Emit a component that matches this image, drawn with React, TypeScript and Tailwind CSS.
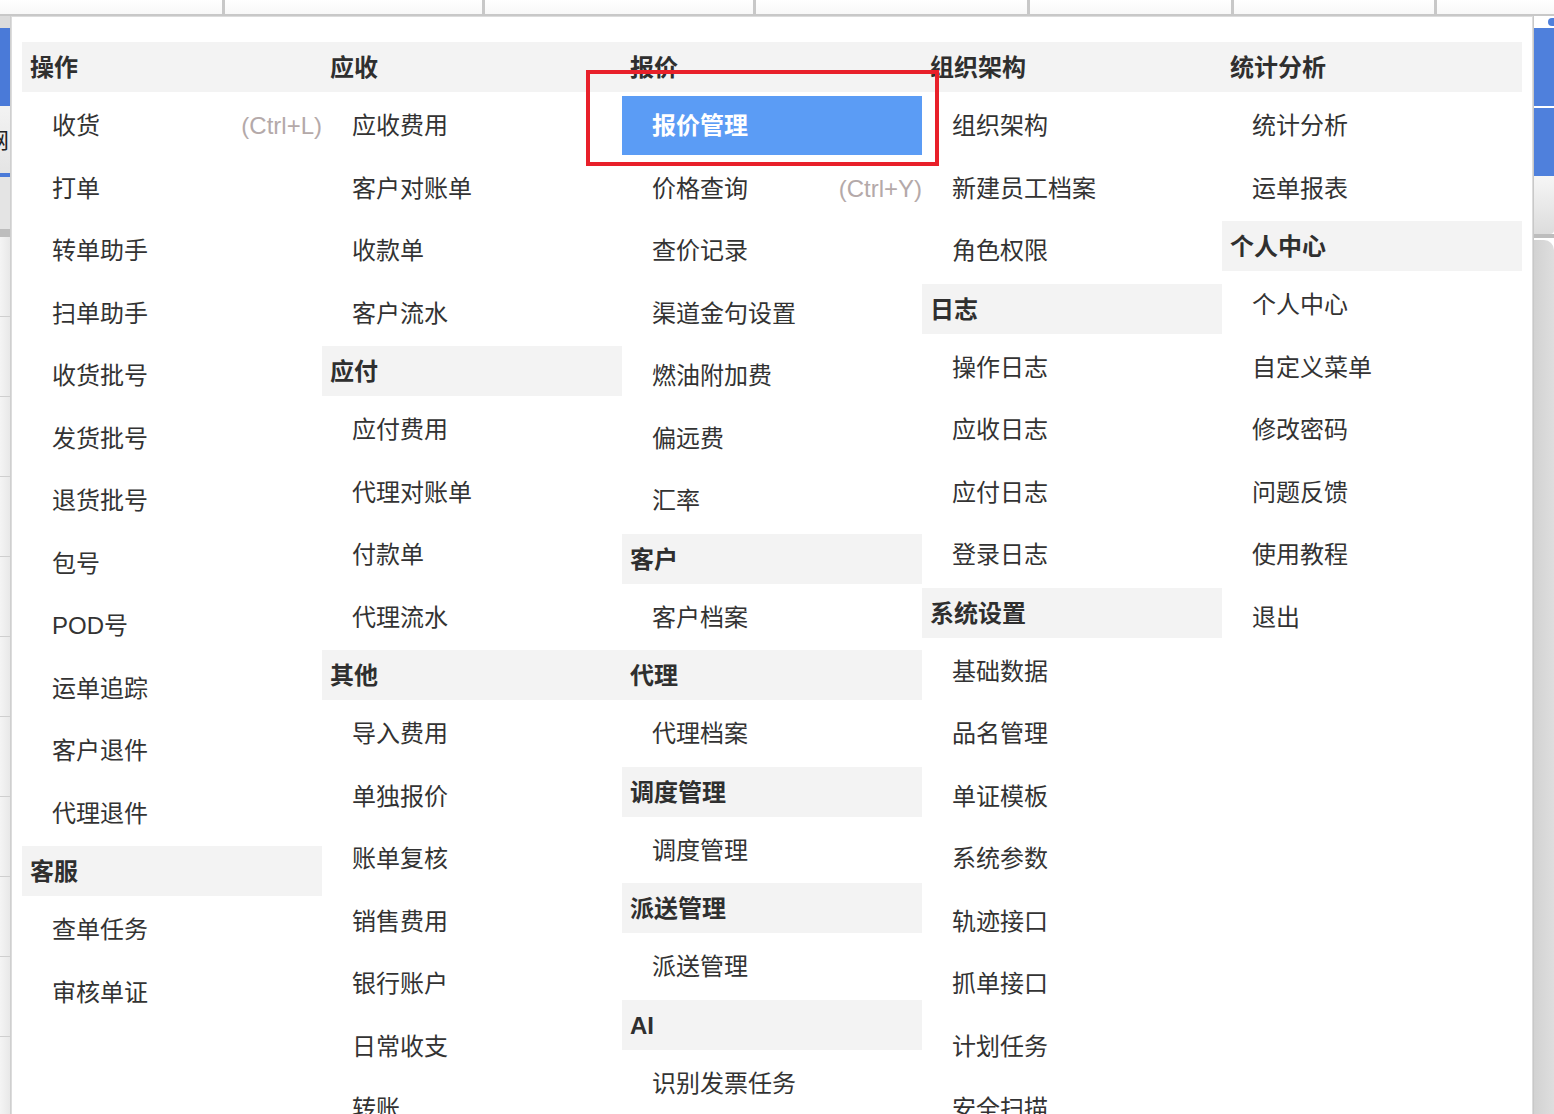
import React from "react";

type Item = { label: string; shortcut?: string; active?: boolean };
type Group = { title: string; items: Item[] };

const columns: Group[][] = [
  [
    {
      title: "操作",
      items: [
        { label: "收货", shortcut: "(Ctrl+L)" },
        { label: "打单" },
        { label: "转单助手" },
        { label: "扫单助手" },
        { label: "收货批号" },
        { label: "发货批号" },
        { label: "退货批号" },
        { label: "包号" },
        { label: "POD号" },
        { label: "运单追踪" },
        { label: "客户退件" },
        { label: "代理退件" },
      ],
    },
    { title: "客服", items: [{ label: "查单任务" }, { label: "审核单证" }] },
  ],
  [
    {
      title: "应收",
      items: [{ label: "应收费用" }, { label: "客户对账单" }, { label: "收款单" }, { label: "客户流水" }],
    },
    {
      title: "应付",
      items: [{ label: "应付费用" }, { label: "代理对账单" }, { label: "付款单" }, { label: "代理流水" }],
    },
    {
      title: "其他",
      items: [
        { label: "导入费用" },
        { label: "单独报价" },
        { label: "账单复核" },
        { label: "销售费用" },
        { label: "银行账户" },
        { label: "日常收支" },
        { label: "转账" },
      ],
    },
  ],
  [
    {
      title: "报价",
      items: [
        { label: "报价管理", active: true },
        { label: "价格查询", shortcut: "(Ctrl+Y)" },
        { label: "查价记录" },
        { label: "渠道金句设置" },
        { label: "燃油附加费" },
        { label: "偏远费" },
        { label: "汇率" },
      ],
    },
    { title: "客户", items: [{ label: "客户档案" }] },
    { title: "代理", items: [{ label: "代理档案" }] },
    { title: "调度管理", items: [{ label: "调度管理" }] },
    { title: "派送管理", items: [{ label: "派送管理" }] },
    { title: "AI", items: [{ label: "识别发票任务" }] },
  ],
  [
    {
      title: "组织架构",
      items: [{ label: "组织架构" }, { label: "新建员工档案" }, { label: "角色权限" }],
    },
    {
      title: "日志",
      items: [{ label: "操作日志" }, { label: "应收日志" }, { label: "应付日志" }, { label: "登录日志" }],
    },
    {
      title: "系统设置",
      items: [
        { label: "基础数据" },
        { label: "品名管理" },
        { label: "单证模板" },
        { label: "系统参数" },
        { label: "轨迹接口" },
        { label: "抓单接口" },
        { label: "计划任务" },
        { label: "安全扫描" },
      ],
    },
  ],
  [
    { title: "统计分析", items: [{ label: "统计分析" }, { label: "运单报表" }] },
    {
      title: "个人中心",
      items: [
        { label: "个人中心" },
        { label: "自定义菜单" },
        { label: "修改密码" },
        { label: "问题反馈" },
        { label: "使用教程" },
        { label: "退出" },
      ],
    },
  ],
];

// widths of the table header cells behind the menu (border included)
const headerCells = [225, 260, 271, 274, 204, 203, 117];

function MenuGroup({ group }: { group: Group }) {
  return (
    <div className="mb-1">
      <div className="h-[50px] flex items-center pl-2 pt-[2px] bg-[#f3f3f3] font-bold text-[#2f2f2f]">
        {group.title}
      </div>
      {group.items.map((item) => (
        <div key={item.label} className="h-[62.5px] pt-1">
          <div
            className={
              item.active
                ? "h-full flex items-center pl-[30px] pt-[2px] bg-[#5b9cf5] text-white font-bold"
                : "h-full flex items-center pl-[30px] pt-[2px] text-[#333]"
            }
          >
            <span className="flex-1">{item.label}</span>
            {item.shortcut && <span className="text-[#b4a9a9]">{item.shortcut}</span>}
          </div>
        </div>
      ))}
    </div>
  );
}

export default function App() {
  return (
    <div
      className="relative w-[1554px] h-[1114px] overflow-hidden bg-white text-[24px] leading-none"
      style={{ fontFamily: '"Liberation Sans", "Noto Sans CJK SC", sans-serif' }}
    >
      {/* table header behind */}
      <div className="flex h-[16px] border-b-2 border-[#c8c8c8]">
        {headerCells.map((w, i) => (
          <div
            key={i}
            className="h-full shrink-0 bg-gradient-to-b from-white to-[#f8f8f8] border-r-[3px] border-[#c8c8c8] last:border-r-0"
            style={{ width: w }}
          />
        ))}
      </div>

      <div className="flex">
        {/* left page strip */}
        <div className="w-[11px] shrink-0 flex flex-col bg-[#ececec] border-r border-[#cfcfcf]">
          <div className="h-[12px] bg-[#dcdcdc]" />
          <div className="h-[78px] bg-[#4a7ad8]" />
          <div className="h-[5px] bg-[#f2f2f2]" />
          <div className="h-[62px] bg-gradient-to-b from-[#f2f2f2] to-[#e4e4e4] overflow-hidden text-[22px] text-[#222] leading-[60px] -indent-[13px]">
            网
          </div>
          <div className="h-[4px] bg-[#4a7ad8]" />
          <div className="h-[52px] bg-[#e4e4e4]" />
          <div className="h-[8px] bg-[#bdbdbd]" />
          {Array.from({ length: 11 }).map((_, i) => (
            <div key={i} className="h-[80px] bg-gradient-to-r from-[#f4f4f4] to-[#e8e8e8] border-b border-[#cfcfcf]" />
          ))}
        </div>

        {/* menu panel */}
        <div className="w-[1522px] shrink-0 border border-[#dcdcdc] bg-white pt-[25px] px-[10px]">
          <div className="flex items-start">
            {columns.map((col, i) => (
              <div key={i} className="w-[300px] shrink-0">
                {col.map((g) => (
                  <MenuGroup key={g.title} group={g} />
                ))}
              </div>
            ))}
          </div>
        </div>

        {/* right page strip */}
        <div className="w-[21px] shrink-0 flex flex-col bg-white border-l border-[#c8c8c8]">
          <div className="h-[12px] bg-white flex justify-end">
            <div className="w-[6px] h-[8px] mt-[2px] rounded-l-full bg-[#4f80dc]" />
          </div>
          <div className="h-[78px] bg-[#4f80dc]" />
          <div className="h-[2px] bg-white" />
          <div className="h-[68px] bg-[#4f80dc]" />
          <div className="h-[58px] bg-gradient-to-b from-[#f6f6f6] to-[#dcdcdc] rounded-br-[4px]" />
          <div className="h-[4px] bg-[#bdbdbd]" />
          <div className="h-[1000px] mt-[2px] bg-gradient-to-r from-[#d2d2d2] to-[#dedede] rounded-tr-[10px]" />
        </div>
      </div>

      {/* annotation box */}
      <div className="absolute left-[586px] top-[70px] w-[353px] h-[96px] border-4 border-[#e8202a]" />
    </div>
  );
}
